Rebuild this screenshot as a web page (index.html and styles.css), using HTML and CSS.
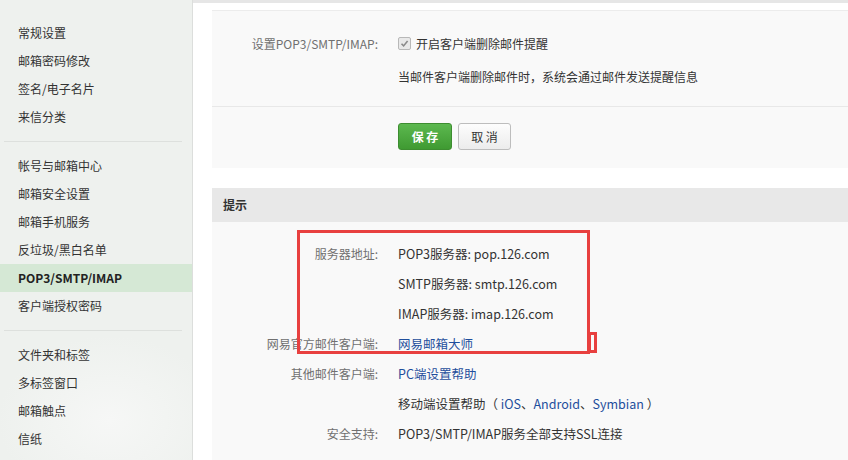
FILE: index.html
```html
<!DOCTYPE html>
<html lang="zh-CN">
<head>
  <meta charset="UTF-8">
  <title>POP3/SMTP/IMAP</title>
  <link rel="stylesheet" href="styles.css">
</head>
<body>
  <div class="layout">
    <div class="sidebar">
      <ul class="menu">
        <li>常规设置</li>
        <li>邮箱密码修改</li>
        <li>签名/电子名片</li>
        <li>来信分类</li>
      </ul>
      <div class="menu-line"></div>
      <ul class="menu">
        <li>帐号与邮箱中心</li>
        <li>邮箱安全设置</li>
        <li>邮箱手机服务</li>
        <li>反垃圾/黑白名单</li>
        <li class="active">POP3/SMTP/IMAP</li>
        <li>客户端授权密码</li>
      </ul>
      <div class="menu-line"></div>
      <ul class="menu">
        <li>文件夹和标签</li>
        <li>多标签窗口</li>
        <li>邮箱触点</li>
        <li>信纸</li>
      </ul>
    </div>

    <div class="main">
      <div class="topbar"></div>

      <div class="panel">
        <div class="form">
          <div class="row">
            <div class="label">设置POP3/SMTP/IMAP:</div>
            <div class="value">
              <span class="check">
                <svg width="11" height="11" viewBox="0 0 11 11"><path d="M2.5 5.8 L4.6 7.9 L8.6 3" fill="none" stroke="#8a8a8a" stroke-width="1.6"/></svg>
              </span>
              开启客户端删除邮件提醒
            </div>
          </div>
          <div class="row">
            <div class="label"></div>
            <div class="value">当邮件客户端删除邮件时，系统会通过邮件发送提醒信息</div>
          </div>
        </div>
        <div class="actions">
          <button class="btn btn-save">保 存</button>
          <button class="btn btn-cancel">取 消</button>
        </div>
      </div>

      <div class="tips">
        <div class="tips-head">提示</div>
        <div class="tips-body">
          <div class="line">
            <div class="label">服务器地址:</div>
            <div class="value">POP3服务器: pop.126.com</div>
          </div>
          <div class="line">
            <div class="label"></div>
            <div class="value">SMTP服务器: smtp.126.com</div>
          </div>
          <div class="line">
            <div class="label"></div>
            <div class="value">IMAP服务器: imap.126.com</div>
          </div>
          <div class="line">
            <div class="label">网易官方邮件客户端:</div>
            <div class="value"><a href="#">网易邮箱大师</a></div>
          </div>
          <div class="line">
            <div class="label">其他邮件客户端:</div>
            <div class="value"><a href="#">PC端设置帮助</a></div>
          </div>
          <div class="line">
            <div class="label"></div>
            <div class="value">移动端设置帮助（&nbsp;<a href="#">iOS</a>、<a href="#">Android</a>、<a href="#">Symbian</a>&nbsp;）</div>
          </div>
          <div class="line">
            <div class="label">安全支持:</div>
            <div class="value">POP3/SMTP/IMAP服务全部支持SSL连接</div>
          </div>
        </div>
        <div class="mark"></div>
        <div class="mark-small"></div>
      </div>
    </div>
  </div>
</body>
</html>
```

FILE: styles.css
```css
body {
  margin: 0;
  font-family: "Noto Sans CJK SC", "Noto Sans", sans-serif;
  font-size: 12px;
  color: #333;
  background: #fff;
}
.layout {
  display: flex;
  height: 460px;
  overflow: hidden;
}
.sidebar {
  width: 192px;
  flex: none;
  border-right: 1px solid #dcdedc;
  background: radial-gradient(ellipse 160px 120px at 110px 420px, #f6f7f6, #eef1ee 70%), #eef1ee;
  padding-top: 19px;
}
.menu {
  list-style: none;
  margin: 0;
  padding: 0;
}
.menu li {
  height: 28px;
  line-height: 28px;
  padding-left: 18px;
  color: #333;
}
.menu li.active {
  background: #d5e8d5;
  font-weight: bold;
  color: #222;
}
.menu-line {
  height: 1px;
  background: #dde0dd;
  margin: 10px 10px 10px 4px;
}
.main {
  flex: 1;
}
.topbar {
  height: 3px;
  background: #e6e6e6;
  margin-bottom: 7px;
}
.panel {
  margin-left: 19px;
  border-top: 1px solid #ececec;
  background: #f9f9f9;
}
.form {
  padding: 20px 0 18px;
  border-bottom: 1px solid #e8e8e8;
}
.row, .line {
  display: flex;
  align-items: center;
}
.row {
  height: 24px;
}
.row + .row {
  margin-top: 9px;
}
.label {
  width: 166px;
  flex: none;
  text-align: right;
  color: #707070;
  padding-right: 20px;
}
.value {
  display: flex;
  align-items: center;
}
.check {
  width: 11px;
  height: 11px;
  border: 1px solid #b8b8b8;
  border-radius: 2px;
  background: #e9e9e9;
  margin-right: 5px;
  display: flex;
}
.actions {
  padding: 16px 0 18px 186px;
  display: flex;
  gap: 6px;
}
.btn {
  height: 27px;
  border-radius: 3px;
  font-family: inherit;
  font-size: 12px;
  padding: 0;
  cursor: pointer;
}
.btn-save {
  width: 54px;
  color: #fff;
  font-weight: bold;
  border: 1px solid #3d8d30;
  background: linear-gradient(#5cb84f, #3f9a32);
}
.btn-cancel {
  width: 53px;
  color: #333;
  border: 1px solid #bdbdbd;
  background: linear-gradient(#fdfdfd, #ececec);
}
.tips {
  margin: 20px 0 0 19px;
  position: relative;
  background: #f9f9f9;
  height: 300px;
}
.tips-head {
  height: 34px;
  line-height: 34px;
  background: #e8e8e8;
  padding-left: 11px;
  font-weight: bold;
  color: #333;
}
.tips-body {
  padding-top: 16px;
}
.line {
  height: 30px;
}
.line .value {
  font-size: 12.5px;
}
a {
  color: #1f4e9c;
  text-decoration: none;
}
.mark {
  position: absolute;
  left: 85px;
  top: 42px;
  width: 287px;
  height: 118px;
  border: 3px solid #e8403f;
}
.mark-small {
  position: absolute;
  left: 376px;
  top: 144px;
  width: 3px;
  height: 15px;
  border: 3px solid #e8403f;
}
```
